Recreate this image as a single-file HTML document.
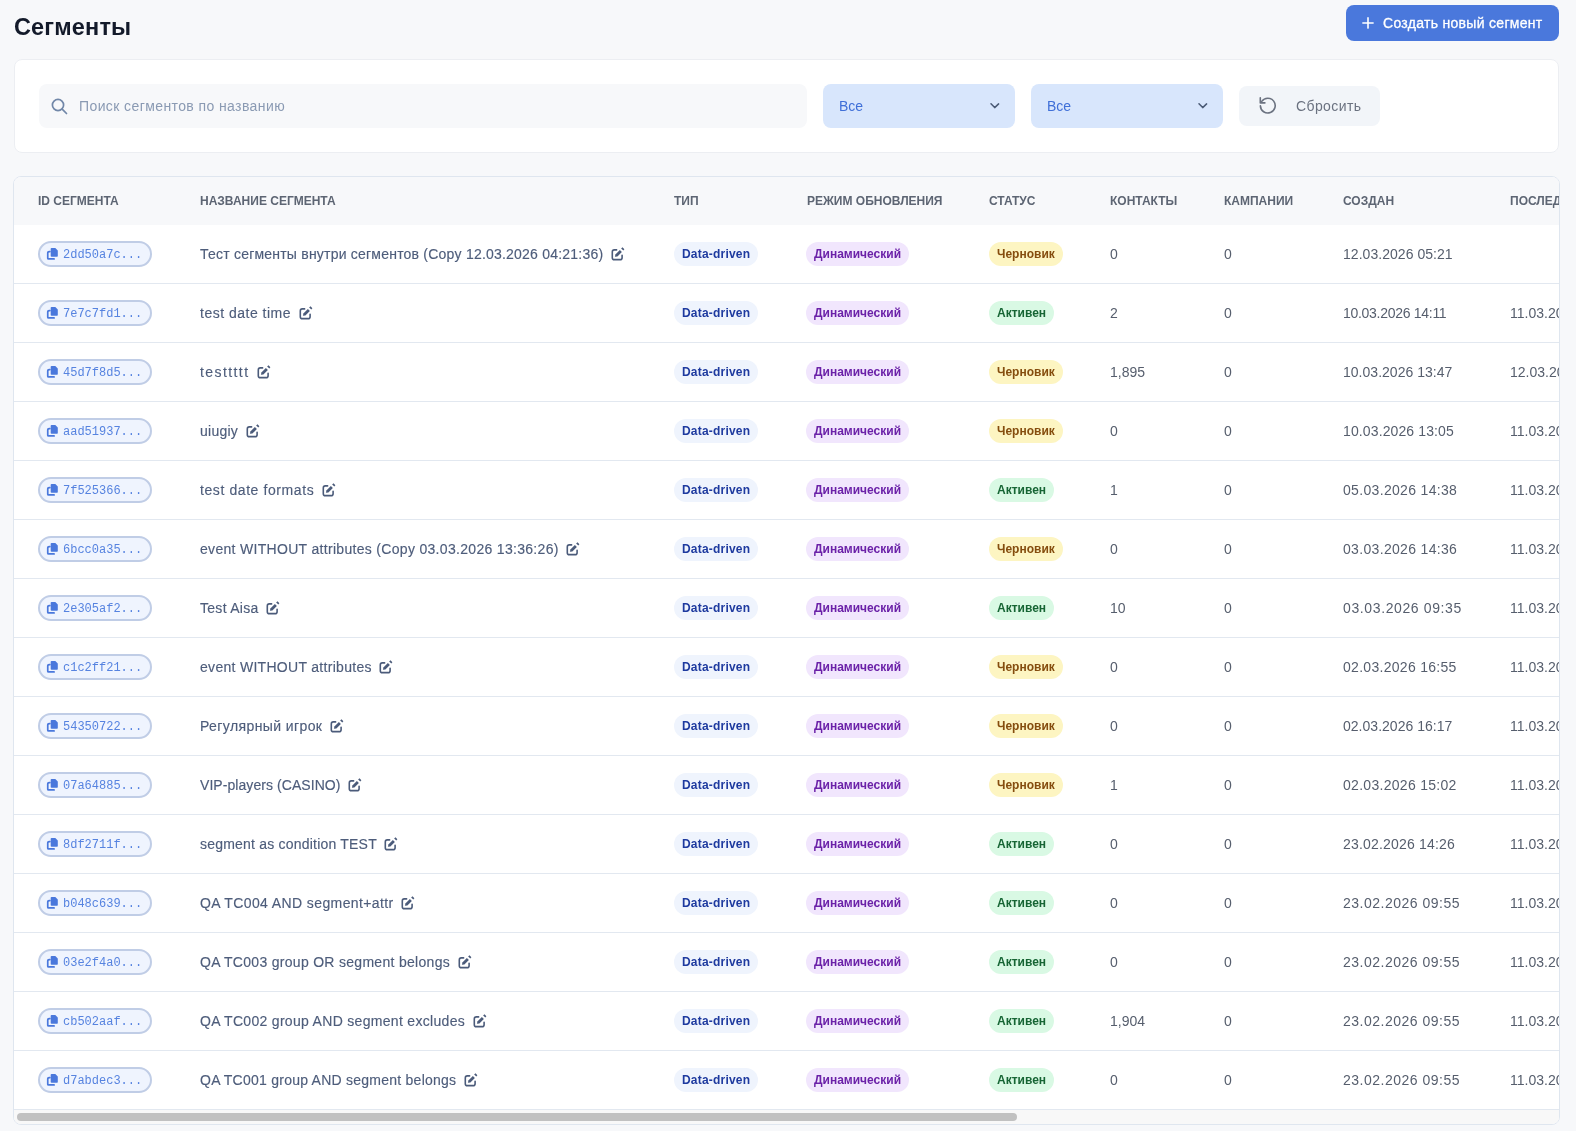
<!DOCTYPE html>
<html><head><meta charset="utf-8">
<style>
*{box-sizing:border-box;margin:0;padding:0}
html,body{width:1576px;height:1131px;overflow:hidden;background:#f7f8fa;font-family:"Liberation Sans",sans-serif;color:#52617c}
.title{position:absolute;left:14px;top:12px;font-size:23.5px;letter-spacing:0.15px;font-weight:700;color:#131a2a;line-height:30px}
.btn{position:absolute;left:1346px;top:5px;width:213px;height:36px;background:#4a78dc;border-radius:8px;color:#fff;font-size:14px;letter-spacing:0.3px}
.btn svg{position:absolute;left:16px;top:12px}
.btn span{position:absolute;left:37px;top:0;line-height:36px;-webkit-text-stroke:0.3px #fff}
.card{position:absolute;left:14px;top:59px;width:1545px;height:94px;background:#fff;border:1px solid #eceef2;border-radius:8px}
.search{position:absolute;left:24px;top:24px;width:768px;height:44px;background:#f7f8fa;border-radius:8px}
.search svg{position:absolute;left:11.5px;top:14px}
.search span{position:absolute;left:40px;top:0;line-height:44px;font-size:14px;color:#8a9ab3;letter-spacing:0.4px}
.sel{position:absolute;top:24px;width:192px;height:44px;background:#d8e6fc;border-radius:8px;color:#3f6fd8;font-size:14px}
.sel span{position:absolute;left:16px;line-height:44px;top:0}
.sel svg{position:absolute;left:167px;top:18px}
.reset{position:absolute;left:1224px;top:26px;width:141px;height:40px;background:#f2f5f9;border-radius:8px;color:#6b7280;font-size:14px}
.reset svg{position:absolute;left:19.5px;top:10px}
.reset span{position:absolute;left:57px;top:0;line-height:40px;letter-spacing:0.4px}
.tbl{position:absolute;left:13px;top:176px;width:1547px;height:949px;background:#fff;border:1px solid #dfe6ef;border-radius:8px;overflow:hidden}
.thead{position:absolute;left:0;top:0;width:1600px;height:48px;background:#f7f8fa}
.th{position:absolute;top:0;line-height:48px;font-size:12px;font-weight:700;color:#5d6573;white-space:nowrap}
.row{position:absolute;left:0;width:1600px;height:59px;border-bottom:1px solid #e2e8f0}
.c{position:absolute;top:0;height:58px;line-height:58px;font-size:14px;white-space:nowrap}
.idb{position:absolute;left:24px;top:16px;width:114px;height:26px;border:2px solid #c0cde6;background:#eff4fe;border-radius:13px}
.idb svg{position:absolute;left:6px;top:4px}
.idb span{position:absolute;left:23px;top:1px;line-height:22px;font-family:"Liberation Mono",monospace;font-size:12px;color:#5683e0}
.bd{position:absolute;top:17px;height:24px;line-height:24px;padding:0 8px;border-radius:12px;font-size:12px;font-weight:700;white-space:nowrap}
.dd{left:660px;background:#eff4fd;color:#1e3a9f;letter-spacing:0.2px}
.dy{left:792px;background:#f1e6fd;color:#6b21a8}
.dr{left:975px;background:#fdf5c2;color:#854d0e}
.ac{left:975px;background:#d9f9e4;color:#166534}
.c{color:#565e6d}
.nm{color:#4e5d7b;-webkit-text-stroke:0.15px #4e5d7b}
.ed{display:inline-block;vertical-align:top;margin-left:4.5px;margin-top:19px}
.sb{position:absolute;left:0;top:933px;width:1547px;height:15px;background:#f8f8f8}
.thumb{position:absolute;left:3px;top:3px;width:1000px;height:8px;background:#c1c1c1;border-radius:4px}
.wrap{position:absolute;left:0;top:0;width:1576px;height:1131px;will-change:transform}
</style></head><body><div class="wrap">
<div class="title">Сегменты</div>
<div class="btn"><svg width="12" height="12" viewBox="0 0 12 12"><path d="M6 0.9V11.1M0.9 6H11.1" stroke="#fff" stroke-width="1.6" stroke-linecap="round"/></svg><span>Создать новый сегмент</span></div>
<div class="card">
 <div class="search"><svg width="17" height="17" viewBox="0 0 17 17"><circle cx="7" cy="7" r="5.6" fill="none" stroke="#7187a8" stroke-width="1.7"/><path d="M11.2 11.2L15.5 15.5" stroke="#7187a8" stroke-width="1.7" stroke-linecap="round"/></svg><span>Поиск сегментов по названию</span></div>
 <div class="sel" style="left:808px"><span>Все</span><svg width="10" height="7" viewBox="0 0 10 7"><path d="M1 1.7L4.7 5.6L8.6 1.9" fill="none" stroke="#4a5a75" stroke-width="1.5" stroke-linecap="round" stroke-linejoin="round"/></svg></div>
 <div class="sel" style="left:1016px"><span>Все</span><svg width="10" height="7" viewBox="0 0 10 7"><path d="M1 1.7L4.7 5.6L8.6 1.9" fill="none" stroke="#4a5a75" stroke-width="1.5" stroke-linecap="round" stroke-linejoin="round"/></svg></div>
 <div class="reset"><svg width="18" height="18" viewBox="0 0 18 18"><path d="M2.74 5.36A7.4 7.4 0 1 1 1.4 9.86" fill="none" stroke="#6b7280" stroke-width="1.6" stroke-linecap="round"/><path d="M1.3 1.7V6.9H5.9" fill="none" stroke="#6b7280" stroke-width="1.6" stroke-linecap="round" stroke-linejoin="round"/></svg><span>Сбросить</span></div>
</div>
<div class="tbl">
 <div class="thead">
  <div class="th" style="left:24px">ID СЕГМЕНТА</div>
  <div class="th" style="left:186px">НАЗВАНИЕ СЕГМЕНТА</div>
  <div class="th" style="left:660px">ТИП</div>
  <div class="th" style="left:793px">РЕЖИМ ОБНОВЛЕНИЯ</div>
  <div class="th" style="left:975px">СТАТУС</div>
  <div class="th" style="left:1096px">КОНТАКТЫ</div>
  <div class="th" style="left:1210px">КАМПАНИИ</div>
  <div class="th" style="left:1329px">СОЗДАН</div>
  <div class="th" style="left:1496px">ПОСЛЕДНЕЕ ОБНОВЛЕНИЕ</div>
 </div>
 <div id="rows">
<div class="row" style="top:48px">
<div class="idb"><svg width="12" height="13" viewBox="0 0 12 13"><path d="M5.5 0.9H9.3L11.8 3.4V9.0Q11.8 9.8 11 9.8H5.5Q4.7 9.8 4.7 9.0V1.7Q4.7 0.9 5.5 0.9Z" fill="#4a78dc"/><path d="M3.9 4.6H3.2Q1.75 4.6 1.75 6V11.2Q1.75 11.9 2.5 11.9H8.1" fill="none" stroke="#4a78dc" stroke-width="1.7" stroke-linecap="round"/></svg><span>2dd50a7c...</span></div>
<div class="c nm" style="left:186px"><span style="letter-spacing:0.214px">Тест сегменты внутри сегментов (Copy 12.03.2026 04:21:36)</span><svg class="ed" width="20" height="20" viewBox="0 0 20 20"><path d="M8.6 5.9H6.3Q4.3 5.9 4.3 7.9V13.65Q4.3 15.65 6.3 15.65H12.1Q14.1 15.65 14.1 13.65V11.2" fill="none" stroke="#4b5b7a" stroke-width="1.6" stroke-linecap="round"/><path d="M6.9 12.8L7.4 10.6L11.9 6.1L13.9 8.1L9.4 12.5Z" fill="#4b5b7a"/><path d="M13.1 4.4L14.5 3.3L16.4 5.2L15.3 6.6Z" fill="#4b5b7a"/></svg></div>
<div class="bd dd">Data-driven</div><div class="bd dy">Динамический</div><div class="bd dr">Черновик</div>
<div class="c" style="left:1096px">0</div><div class="c" style="left:1210px">0</div><div class="c" style="left:1329px;letter-spacing:0.04px">12.03.2026 05:21</div><div class="c" style="left:1496px"></div>
</div>
<div class="row" style="top:107px">
<div class="idb"><svg width="12" height="13" viewBox="0 0 12 13"><path d="M5.5 0.9H9.3L11.8 3.4V9.0Q11.8 9.8 11 9.8H5.5Q4.7 9.8 4.7 9.0V1.7Q4.7 0.9 5.5 0.9Z" fill="#4a78dc"/><path d="M3.9 4.6H3.2Q1.75 4.6 1.75 6V11.2Q1.75 11.9 2.5 11.9H8.1" fill="none" stroke="#4a78dc" stroke-width="1.7" stroke-linecap="round"/></svg><span>7e7c7fd1...</span></div>
<div class="c nm" style="left:186px"><span style="letter-spacing:0.5px">test date time</span><svg class="ed" width="20" height="20" viewBox="0 0 20 20"><path d="M8.6 5.9H6.3Q4.3 5.9 4.3 7.9V13.65Q4.3 15.65 6.3 15.65H12.1Q14.1 15.65 14.1 13.65V11.2" fill="none" stroke="#4b5b7a" stroke-width="1.6" stroke-linecap="round"/><path d="M6.9 12.8L7.4 10.6L11.9 6.1L13.9 8.1L9.4 12.5Z" fill="#4b5b7a"/><path d="M13.1 4.4L14.5 3.3L16.4 5.2L15.3 6.6Z" fill="#4b5b7a"/></svg></div>
<div class="bd dd">Data-driven</div><div class="bd dy">Динамический</div><div class="bd ac">Активен</div>
<div class="c" style="left:1096px">2</div><div class="c" style="left:1210px">0</div><div class="c" style="left:1329px;letter-spacing:-0.287px">10.03.2026 14:11</div><div class="c" style="left:1496px">11.03.2026 10:00</div>
</div>
<div class="row" style="top:166px">
<div class="idb"><svg width="12" height="13" viewBox="0 0 12 13"><path d="M5.5 0.9H9.3L11.8 3.4V9.0Q11.8 9.8 11 9.8H5.5Q4.7 9.8 4.7 9.0V1.7Q4.7 0.9 5.5 0.9Z" fill="#4a78dc"/><path d="M3.9 4.6H3.2Q1.75 4.6 1.75 6V11.2Q1.75 11.9 2.5 11.9H8.1" fill="none" stroke="#4a78dc" stroke-width="1.7" stroke-linecap="round"/></svg><span>45d7f8d5...</span></div>
<div class="c nm" style="left:186px"><span style="letter-spacing:1.414px">testtttt</span><svg class="ed" width="20" height="20" viewBox="0 0 20 20"><path d="M8.6 5.9H6.3Q4.3 5.9 4.3 7.9V13.65Q4.3 15.65 6.3 15.65H12.1Q14.1 15.65 14.1 13.65V11.2" fill="none" stroke="#4b5b7a" stroke-width="1.6" stroke-linecap="round"/><path d="M6.9 12.8L7.4 10.6L11.9 6.1L13.9 8.1L9.4 12.5Z" fill="#4b5b7a"/><path d="M13.1 4.4L14.5 3.3L16.4 5.2L15.3 6.6Z" fill="#4b5b7a"/></svg></div>
<div class="bd dd">Data-driven</div><div class="bd dy">Динамический</div><div class="bd dr">Черновик</div>
<div class="c" style="left:1096px">1,895</div><div class="c" style="left:1210px">0</div><div class="c" style="left:1329px;letter-spacing:0.02px">10.03.2026 13:47</div><div class="c" style="left:1496px">12.03.2026 10:00</div>
</div>
<div class="row" style="top:225px">
<div class="idb"><svg width="12" height="13" viewBox="0 0 12 13"><path d="M5.5 0.9H9.3L11.8 3.4V9.0Q11.8 9.8 11 9.8H5.5Q4.7 9.8 4.7 9.0V1.7Q4.7 0.9 5.5 0.9Z" fill="#4a78dc"/><path d="M3.9 4.6H3.2Q1.75 4.6 1.75 6V11.2Q1.75 11.9 2.5 11.9H8.1" fill="none" stroke="#4a78dc" stroke-width="1.7" stroke-linecap="round"/></svg><span>aad51937...</span></div>
<div class="c nm" style="left:186px"><span style="letter-spacing:0.24px">uiugiy</span><svg class="ed" width="20" height="20" viewBox="0 0 20 20"><path d="M8.6 5.9H6.3Q4.3 5.9 4.3 7.9V13.65Q4.3 15.65 6.3 15.65H12.1Q14.1 15.65 14.1 13.65V11.2" fill="none" stroke="#4b5b7a" stroke-width="1.6" stroke-linecap="round"/><path d="M6.9 12.8L7.4 10.6L11.9 6.1L13.9 8.1L9.4 12.5Z" fill="#4b5b7a"/><path d="M13.1 4.4L14.5 3.3L16.4 5.2L15.3 6.6Z" fill="#4b5b7a"/></svg></div>
<div class="bd dd">Data-driven</div><div class="bd dy">Динамический</div><div class="bd dr">Черновик</div>
<div class="c" style="left:1096px">0</div><div class="c" style="left:1210px">0</div><div class="c" style="left:1329px;letter-spacing:0.12px">10.03.2026 13:05</div><div class="c" style="left:1496px">11.03.2026 10:00</div>
</div>
<div class="row" style="top:284px">
<div class="idb"><svg width="12" height="13" viewBox="0 0 12 13"><path d="M5.5 0.9H9.3L11.8 3.4V9.0Q11.8 9.8 11 9.8H5.5Q4.7 9.8 4.7 9.0V1.7Q4.7 0.9 5.5 0.9Z" fill="#4a78dc"/><path d="M3.9 4.6H3.2Q1.75 4.6 1.75 6V11.2Q1.75 11.9 2.5 11.9H8.1" fill="none" stroke="#4a78dc" stroke-width="1.7" stroke-linecap="round"/></svg><span>7f525366...</span></div>
<div class="c nm" style="left:186px"><span style="letter-spacing:0.587px">test date formats</span><svg class="ed" width="20" height="20" viewBox="0 0 20 20"><path d="M8.6 5.9H6.3Q4.3 5.9 4.3 7.9V13.65Q4.3 15.65 6.3 15.65H12.1Q14.1 15.65 14.1 13.65V11.2" fill="none" stroke="#4b5b7a" stroke-width="1.6" stroke-linecap="round"/><path d="M6.9 12.8L7.4 10.6L11.9 6.1L13.9 8.1L9.4 12.5Z" fill="#4b5b7a"/><path d="M13.1 4.4L14.5 3.3L16.4 5.2L15.3 6.6Z" fill="#4b5b7a"/></svg></div>
<div class="bd dd">Data-driven</div><div class="bd dy">Динамический</div><div class="bd ac">Активен</div>
<div class="c" style="left:1096px">1</div><div class="c" style="left:1210px">0</div><div class="c" style="left:1329px;letter-spacing:0.327px">05.03.2026 14:38</div><div class="c" style="left:1496px">11.03.2026 10:00</div>
</div>
<div class="row" style="top:343px">
<div class="idb"><svg width="12" height="13" viewBox="0 0 12 13"><path d="M5.5 0.9H9.3L11.8 3.4V9.0Q11.8 9.8 11 9.8H5.5Q4.7 9.8 4.7 9.0V1.7Q4.7 0.9 5.5 0.9Z" fill="#4a78dc"/><path d="M3.9 4.6H3.2Q1.75 4.6 1.75 6V11.2Q1.75 11.9 2.5 11.9H8.1" fill="none" stroke="#4a78dc" stroke-width="1.7" stroke-linecap="round"/></svg><span>6bcc0a35...</span></div>
<div class="c nm" style="left:186px"><span style="letter-spacing:0.31px">event WITHOUT attributes (Copy 03.03.2026 13:36:26)</span><svg class="ed" width="20" height="20" viewBox="0 0 20 20"><path d="M8.6 5.9H6.3Q4.3 5.9 4.3 7.9V13.65Q4.3 15.65 6.3 15.65H12.1Q14.1 15.65 14.1 13.65V11.2" fill="none" stroke="#4b5b7a" stroke-width="1.6" stroke-linecap="round"/><path d="M6.9 12.8L7.4 10.6L11.9 6.1L13.9 8.1L9.4 12.5Z" fill="#4b5b7a"/><path d="M13.1 4.4L14.5 3.3L16.4 5.2L15.3 6.6Z" fill="#4b5b7a"/></svg></div>
<div class="bd dd">Data-driven</div><div class="bd dy">Динамический</div><div class="bd dr">Черновик</div>
<div class="c" style="left:1096px">0</div><div class="c" style="left:1210px">0</div><div class="c" style="left:1329px;letter-spacing:0.327px">03.03.2026 14:36</div><div class="c" style="left:1496px">11.03.2026 10:00</div>
</div>
<div class="row" style="top:402px">
<div class="idb"><svg width="12" height="13" viewBox="0 0 12 13"><path d="M5.5 0.9H9.3L11.8 3.4V9.0Q11.8 9.8 11 9.8H5.5Q4.7 9.8 4.7 9.0V1.7Q4.7 0.9 5.5 0.9Z" fill="#4a78dc"/><path d="M3.9 4.6H3.2Q1.75 4.6 1.75 6V11.2Q1.75 11.9 2.5 11.9H8.1" fill="none" stroke="#4a78dc" stroke-width="1.7" stroke-linecap="round"/></svg><span>2e305af2...</span></div>
<div class="c nm" style="left:186px"><span style="letter-spacing:0.288px">Test Aisa</span><svg class="ed" width="20" height="20" viewBox="0 0 20 20"><path d="M8.6 5.9H6.3Q4.3 5.9 4.3 7.9V13.65Q4.3 15.65 6.3 15.65H12.1Q14.1 15.65 14.1 13.65V11.2" fill="none" stroke="#4b5b7a" stroke-width="1.6" stroke-linecap="round"/><path d="M6.9 12.8L7.4 10.6L11.9 6.1L13.9 8.1L9.4 12.5Z" fill="#4b5b7a"/><path d="M13.1 4.4L14.5 3.3L16.4 5.2L15.3 6.6Z" fill="#4b5b7a"/></svg></div>
<div class="bd dd">Data-driven</div><div class="bd dy">Динамический</div><div class="bd ac">Активен</div>
<div class="c" style="left:1096px">10</div><div class="c" style="left:1210px">0</div><div class="c" style="left:1329px;letter-spacing:0.62px">03.03.2026 09:35</div><div class="c" style="left:1496px">11.03.2026 10:00</div>
</div>
<div class="row" style="top:461px">
<div class="idb"><svg width="12" height="13" viewBox="0 0 12 13"><path d="M5.5 0.9H9.3L11.8 3.4V9.0Q11.8 9.8 11 9.8H5.5Q4.7 9.8 4.7 9.0V1.7Q4.7 0.9 5.5 0.9Z" fill="#4a78dc"/><path d="M3.9 4.6H3.2Q1.75 4.6 1.75 6V11.2Q1.75 11.9 2.5 11.9H8.1" fill="none" stroke="#4a78dc" stroke-width="1.7" stroke-linecap="round"/></svg><span>c1c2ff21...</span></div>
<div class="c nm" style="left:186px"><span style="letter-spacing:0.296px">event WITHOUT attributes</span><svg class="ed" width="20" height="20" viewBox="0 0 20 20"><path d="M8.6 5.9H6.3Q4.3 5.9 4.3 7.9V13.65Q4.3 15.65 6.3 15.65H12.1Q14.1 15.65 14.1 13.65V11.2" fill="none" stroke="#4b5b7a" stroke-width="1.6" stroke-linecap="round"/><path d="M6.9 12.8L7.4 10.6L11.9 6.1L13.9 8.1L9.4 12.5Z" fill="#4b5b7a"/><path d="M13.1 4.4L14.5 3.3L16.4 5.2L15.3 6.6Z" fill="#4b5b7a"/></svg></div>
<div class="bd dd">Data-driven</div><div class="bd dy">Динамический</div><div class="bd dr">Черновик</div>
<div class="c" style="left:1096px">0</div><div class="c" style="left:1210px">0</div><div class="c" style="left:1329px;letter-spacing:0.293px">02.03.2026 16:55</div><div class="c" style="left:1496px">11.03.2026 10:00</div>
</div>
<div class="row" style="top:520px">
<div class="idb"><svg width="12" height="13" viewBox="0 0 12 13"><path d="M5.5 0.9H9.3L11.8 3.4V9.0Q11.8 9.8 11 9.8H5.5Q4.7 9.8 4.7 9.0V1.7Q4.7 0.9 5.5 0.9Z" fill="#4a78dc"/><path d="M3.9 4.6H3.2Q1.75 4.6 1.75 6V11.2Q1.75 11.9 2.5 11.9H8.1" fill="none" stroke="#4a78dc" stroke-width="1.7" stroke-linecap="round"/></svg><span>54350722...</span></div>
<div class="c nm" style="left:186px"><span style="letter-spacing:0.4px">Регулярный игрок</span><svg class="ed" width="20" height="20" viewBox="0 0 20 20"><path d="M8.6 5.9H6.3Q4.3 5.9 4.3 7.9V13.65Q4.3 15.65 6.3 15.65H12.1Q14.1 15.65 14.1 13.65V11.2" fill="none" stroke="#4b5b7a" stroke-width="1.6" stroke-linecap="round"/><path d="M6.9 12.8L7.4 10.6L11.9 6.1L13.9 8.1L9.4 12.5Z" fill="#4b5b7a"/><path d="M13.1 4.4L14.5 3.3L16.4 5.2L15.3 6.6Z" fill="#4b5b7a"/></svg></div>
<div class="bd dd">Data-driven</div><div class="bd dy">Динамический</div><div class="bd dr">Черновик</div>
<div class="c" style="left:1096px">0</div><div class="c" style="left:1210px">0</div><div class="c" style="left:1329px;letter-spacing:0.02px">02.03.2026 16:17</div><div class="c" style="left:1496px">11.03.2026 10:00</div>
</div>
<div class="row" style="top:579px">
<div class="idb"><svg width="12" height="13" viewBox="0 0 12 13"><path d="M5.5 0.9H9.3L11.8 3.4V9.0Q11.8 9.8 11 9.8H5.5Q4.7 9.8 4.7 9.0V1.7Q4.7 0.9 5.5 0.9Z" fill="#4a78dc"/><path d="M3.9 4.6H3.2Q1.75 4.6 1.75 6V11.2Q1.75 11.9 2.5 11.9H8.1" fill="none" stroke="#4a78dc" stroke-width="1.7" stroke-linecap="round"/></svg><span>07a64885...</span></div>
<div class="c nm" style="left:186px"><span style="letter-spacing:0.063px">VIP-players (CASINO)</span><svg class="ed" width="20" height="20" viewBox="0 0 20 20"><path d="M8.6 5.9H6.3Q4.3 5.9 4.3 7.9V13.65Q4.3 15.65 6.3 15.65H12.1Q14.1 15.65 14.1 13.65V11.2" fill="none" stroke="#4b5b7a" stroke-width="1.6" stroke-linecap="round"/><path d="M6.9 12.8L7.4 10.6L11.9 6.1L13.9 8.1L9.4 12.5Z" fill="#4b5b7a"/><path d="M13.1 4.4L14.5 3.3L16.4 5.2L15.3 6.6Z" fill="#4b5b7a"/></svg></div>
<div class="bd dd">Data-driven</div><div class="bd dy">Динамический</div><div class="bd dr">Черновик</div>
<div class="c" style="left:1096px">1</div><div class="c" style="left:1210px">0</div><div class="c" style="left:1329px;letter-spacing:0.293px">02.03.2026 15:02</div><div class="c" style="left:1496px">11.03.2026 10:00</div>
</div>
<div class="row" style="top:638px">
<div class="idb"><svg width="12" height="13" viewBox="0 0 12 13"><path d="M5.5 0.9H9.3L11.8 3.4V9.0Q11.8 9.8 11 9.8H5.5Q4.7 9.8 4.7 9.0V1.7Q4.7 0.9 5.5 0.9Z" fill="#4a78dc"/><path d="M3.9 4.6H3.2Q1.75 4.6 1.75 6V11.2Q1.75 11.9 2.5 11.9H8.1" fill="none" stroke="#4a78dc" stroke-width="1.7" stroke-linecap="round"/></svg><span>8df2711f...</span></div>
<div class="c nm" style="left:186px"><span style="letter-spacing:0.208px">segment as condition TEST</span><svg class="ed" width="20" height="20" viewBox="0 0 20 20"><path d="M8.6 5.9H6.3Q4.3 5.9 4.3 7.9V13.65Q4.3 15.65 6.3 15.65H12.1Q14.1 15.65 14.1 13.65V11.2" fill="none" stroke="#4b5b7a" stroke-width="1.6" stroke-linecap="round"/><path d="M6.9 12.8L7.4 10.6L11.9 6.1L13.9 8.1L9.4 12.5Z" fill="#4b5b7a"/><path d="M13.1 4.4L14.5 3.3L16.4 5.2L15.3 6.6Z" fill="#4b5b7a"/></svg></div>
<div class="bd dd">Data-driven</div><div class="bd dy">Динамический</div><div class="bd ac">Активен</div>
<div class="c" style="left:1096px">0</div><div class="c" style="left:1210px">0</div><div class="c" style="left:1329px;letter-spacing:0.193px">23.02.2026 14:26</div><div class="c" style="left:1496px">11.03.2026 10:00</div>
</div>
<div class="row" style="top:697px">
<div class="idb"><svg width="12" height="13" viewBox="0 0 12 13"><path d="M5.5 0.9H9.3L11.8 3.4V9.0Q11.8 9.8 11 9.8H5.5Q4.7 9.8 4.7 9.0V1.7Q4.7 0.9 5.5 0.9Z" fill="#4a78dc"/><path d="M3.9 4.6H3.2Q1.75 4.6 1.75 6V11.2Q1.75 11.9 2.5 11.9H8.1" fill="none" stroke="#4a78dc" stroke-width="1.7" stroke-linecap="round"/></svg><span>b048c639...</span></div>
<div class="c nm" style="left:186px"><span style="letter-spacing:0.396px">QA TC004 AND segment+attr</span><svg class="ed" width="20" height="20" viewBox="0 0 20 20"><path d="M8.6 5.9H6.3Q4.3 5.9 4.3 7.9V13.65Q4.3 15.65 6.3 15.65H12.1Q14.1 15.65 14.1 13.65V11.2" fill="none" stroke="#4b5b7a" stroke-width="1.6" stroke-linecap="round"/><path d="M6.9 12.8L7.4 10.6L11.9 6.1L13.9 8.1L9.4 12.5Z" fill="#4b5b7a"/><path d="M13.1 4.4L14.5 3.3L16.4 5.2L15.3 6.6Z" fill="#4b5b7a"/></svg></div>
<div class="bd dd">Data-driven</div><div class="bd dy">Динамический</div><div class="bd ac">Активен</div>
<div class="c" style="left:1096px">0</div><div class="c" style="left:1210px">0</div><div class="c" style="left:1329px;letter-spacing:0.5px">23.02.2026 09:55</div><div class="c" style="left:1496px">11.03.2026 10:00</div>
</div>
<div class="row" style="top:756px">
<div class="idb"><svg width="12" height="13" viewBox="0 0 12 13"><path d="M5.5 0.9H9.3L11.8 3.4V9.0Q11.8 9.8 11 9.8H5.5Q4.7 9.8 4.7 9.0V1.7Q4.7 0.9 5.5 0.9Z" fill="#4a78dc"/><path d="M3.9 4.6H3.2Q1.75 4.6 1.75 6V11.2Q1.75 11.9 2.5 11.9H8.1" fill="none" stroke="#4a78dc" stroke-width="1.7" stroke-linecap="round"/></svg><span>03e2f4a0...</span></div>
<div class="c nm" style="left:186px"><span style="letter-spacing:0.297px">QA TC003 group OR segment belongs</span><svg class="ed" width="20" height="20" viewBox="0 0 20 20"><path d="M8.6 5.9H6.3Q4.3 5.9 4.3 7.9V13.65Q4.3 15.65 6.3 15.65H12.1Q14.1 15.65 14.1 13.65V11.2" fill="none" stroke="#4b5b7a" stroke-width="1.6" stroke-linecap="round"/><path d="M6.9 12.8L7.4 10.6L11.9 6.1L13.9 8.1L9.4 12.5Z" fill="#4b5b7a"/><path d="M13.1 4.4L14.5 3.3L16.4 5.2L15.3 6.6Z" fill="#4b5b7a"/></svg></div>
<div class="bd dd">Data-driven</div><div class="bd dy">Динамический</div><div class="bd ac">Активен</div>
<div class="c" style="left:1096px">0</div><div class="c" style="left:1210px">0</div><div class="c" style="left:1329px;letter-spacing:0.5px">23.02.2026 09:55</div><div class="c" style="left:1496px">11.03.2026 10:00</div>
</div>
<div class="row" style="top:815px">
<div class="idb"><svg width="12" height="13" viewBox="0 0 12 13"><path d="M5.5 0.9H9.3L11.8 3.4V9.0Q11.8 9.8 11 9.8H5.5Q4.7 9.8 4.7 9.0V1.7Q4.7 0.9 5.5 0.9Z" fill="#4a78dc"/><path d="M3.9 4.6H3.2Q1.75 4.6 1.75 6V11.2Q1.75 11.9 2.5 11.9H8.1" fill="none" stroke="#4a78dc" stroke-width="1.7" stroke-linecap="round"/></svg><span>cb502aaf...</span></div>
<div class="c nm" style="left:186px"><span style="letter-spacing:0.309px">QA TC002 group AND segment excludes</span><svg class="ed" width="20" height="20" viewBox="0 0 20 20"><path d="M8.6 5.9H6.3Q4.3 5.9 4.3 7.9V13.65Q4.3 15.65 6.3 15.65H12.1Q14.1 15.65 14.1 13.65V11.2" fill="none" stroke="#4b5b7a" stroke-width="1.6" stroke-linecap="round"/><path d="M6.9 12.8L7.4 10.6L11.9 6.1L13.9 8.1L9.4 12.5Z" fill="#4b5b7a"/><path d="M13.1 4.4L14.5 3.3L16.4 5.2L15.3 6.6Z" fill="#4b5b7a"/></svg></div>
<div class="bd dd">Data-driven</div><div class="bd dy">Динамический</div><div class="bd ac">Активен</div>
<div class="c" style="left:1096px">1,904</div><div class="c" style="left:1210px">0</div><div class="c" style="left:1329px;letter-spacing:0.5px">23.02.2026 09:55</div><div class="c" style="left:1496px">11.03.2026 10:00</div>
</div>
<div class="row" style="top:874px">
<div class="idb"><svg width="12" height="13" viewBox="0 0 12 13"><path d="M5.5 0.9H9.3L11.8 3.4V9.0Q11.8 9.8 11 9.8H5.5Q4.7 9.8 4.7 9.0V1.7Q4.7 0.9 5.5 0.9Z" fill="#4a78dc"/><path d="M3.9 4.6H3.2Q1.75 4.6 1.75 6V11.2Q1.75 11.9 2.5 11.9H8.1" fill="none" stroke="#4a78dc" stroke-width="1.7" stroke-linecap="round"/></svg><span>d7abdec3...</span></div>
<div class="c nm" style="left:186px"><span style="letter-spacing:0.245px">QA TC001 group AND segment belongs</span><svg class="ed" width="20" height="20" viewBox="0 0 20 20"><path d="M8.6 5.9H6.3Q4.3 5.9 4.3 7.9V13.65Q4.3 15.65 6.3 15.65H12.1Q14.1 15.65 14.1 13.65V11.2" fill="none" stroke="#4b5b7a" stroke-width="1.6" stroke-linecap="round"/><path d="M6.9 12.8L7.4 10.6L11.9 6.1L13.9 8.1L9.4 12.5Z" fill="#4b5b7a"/><path d="M13.1 4.4L14.5 3.3L16.4 5.2L15.3 6.6Z" fill="#4b5b7a"/></svg></div>
<div class="bd dd">Data-driven</div><div class="bd dy">Динамический</div><div class="bd ac">Активен</div>
<div class="c" style="left:1096px">0</div><div class="c" style="left:1210px">0</div><div class="c" style="left:1329px;letter-spacing:0.5px">23.02.2026 09:55</div><div class="c" style="left:1496px">11.03.2026 10:00</div>
</div>
</div><!--rows-->
 <div class="sb"><div class="thumb"></div></div>
</div>
</div></body></html>
